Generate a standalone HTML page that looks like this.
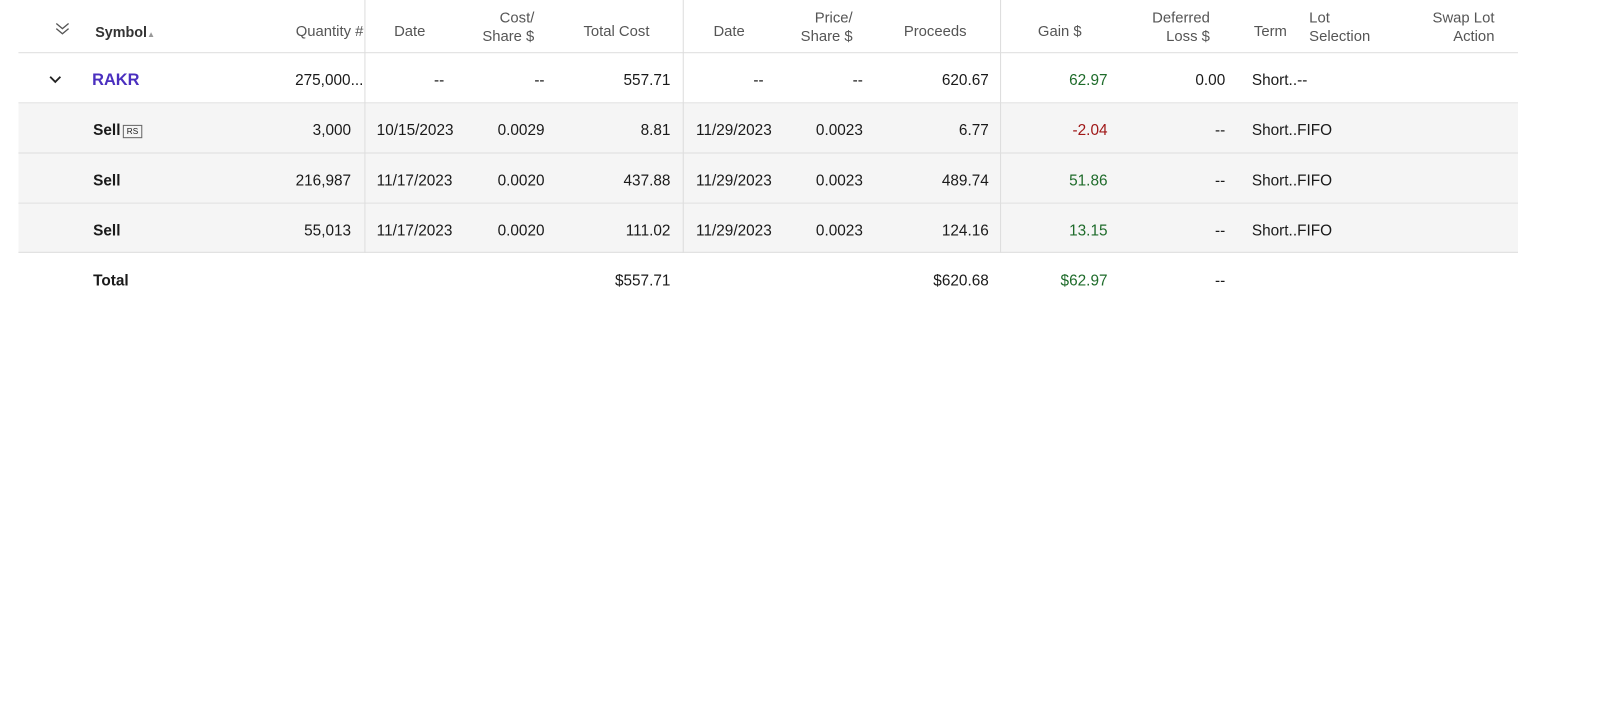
<!DOCTYPE html>
<html><head><meta charset="utf-8"><style>
body{margin:0;width:1605px;height:720px;background:#fff;font-family:"Liberation Sans",sans-serif;font-size:15px;color:#1a1a1a;position:relative;overflow:hidden}
#w{position:absolute;left:0;top:0;width:1568px;height:704px;transform:scale(1.0236);transform-origin:0 0}
.t{position:absolute;white-space:nowrap;line-height:18px}
.r{text-align:right}
.h{color:#555;font-size:14.5px;line-height:18px}
.row{position:absolute;left:18px;width:1465px;border-bottom:1px solid #ddd}
.g{background:#f5f5f5}
.v{position:absolute;top:0;height:247px;width:1px;background:#ddd}
.b{font-weight:bold}
.grn{color:#1e6b2a}.red{color:#a01818}
</style></head><body><div id="w">
<div class="row" style="top:0;height:51px"></div>
<div class="row" style="top:52px;height:48px"></div>
<div class="row g" style="top:101px;height:48px"></div>
<div class="row g" style="top:150px;height:48px"></div>
<div class="row g" style="top:199px;height:47px"></div>
<div class="v" style="left:356px"></div>
<div class="v" style="left:667px"></div>
<div class="v" style="left:977px"></div>

<svg class="t" style="left:53px;top:20px" width="16" height="16" viewBox="0 0 16 16"><path d="M2 3l6 5 6-5M2 8l6 5 6-5" fill="none" stroke="#555" stroke-width="1.3"/></svg>
<div class="t b" style="left:93px;top:22px;font-size:14px;color:#333">Symbol<span style="font-size:8px;color:#999">&#9650;</span></div>
<div class="t h r" style="right:1213px;top:22px">Quantity #</div>
<div class="t h" style="left:385px;top:22px">Date</div>
<div class="t h r" style="right:1046px;top:9px">Cost/<br>Share $</div>
<div class="t h" style="left:570px;top:22px">Total Cost</div>
<div class="t h" style="left:697px;top:22px">Date</div>
<div class="t h r" style="right:735px;top:9px">Price/<br>Share $</div>
<div class="t h" style="left:883px;top:22px">Proceeds</div>
<div class="t h" style="left:1014px;top:22px">Gain $</div>
<div class="t h r" style="right:386px;top:9px">Deferred<br>Loss $</div>
<div class="t h" style="left:1225px;top:22px">Term</div>
<div class="t h" style="left:1279px;top:9px">Lot<br>Selection</div>
<div class="t h r" style="right:108px;top:9px">Swap Lot<br>Action</div>

<svg class="t" style="left:47px;top:71px" width="14" height="14" viewBox="0 0 14 14"><path d="M2 4l5 5 5-5" fill="none" stroke="#222" stroke-width="1.8"/></svg>
<div class="t b" style="left:90px;top:70px;color:#4a2fbf;font-size:16px">RAKR</div>
<div class="t r" style="right:1213px;top:70px">275,000...</div>
<div class="t r" style="right:1134px;top:70px">--</div>
<div class="t r" style="right:1036px;top:70px">--</div>
<div class="t r" style="right:913px;top:70px">557.71</div>
<div class="t r" style="right:822px;top:70px">--</div>
<div class="t r" style="right:725px;top:70px">--</div>
<div class="t r" style="right:602px;top:70px">620.67</div>
<div class="t r grn" style="right:486px;top:70px">62.97</div>
<div class="t r" style="right:371px;top:70px">0.00</div>
<div class="t" style="left:1223px;top:70px">Short..--</div>

<div class="t b" style="left:91px;top:119px">Sell <span style="display:inline-block;border:1px solid #666;font-size:8px;font-weight:normal;line-height:11px;padding:0 3px;vertical-align:1px;margin-left:-2px">RS</span></div>
<div class="t r" style="right:1225px;top:119px">3,000</div>
<div class="t" style="left:368px;top:119px">10/15/2023</div>
<div class="t r" style="right:1036px;top:119px">0.0029</div>
<div class="t r" style="right:913px;top:119px">8.81</div>
<div class="t" style="left:680px;top:119px">11/29/2023</div>
<div class="t r" style="right:725px;top:119px">0.0023</div>
<div class="t r" style="right:602px;top:119px">6.77</div>
<div class="t r red" style="right:486px;top:119px">-2.04</div>
<div class="t r" style="right:371px;top:119px">--</div>
<div class="t" style="left:1223px;top:119px">Short..FIFO</div>

<div class="t b" style="left:91px;top:168px">Sell</div>
<div class="t r" style="right:1225px;top:168px">216,987</div>
<div class="t" style="left:368px;top:168px">11/17/2023</div>
<div class="t r" style="right:1036px;top:168px">0.0020</div>
<div class="t r" style="right:913px;top:168px">437.88</div>
<div class="t" style="left:680px;top:168px">11/29/2023</div>
<div class="t r" style="right:725px;top:168px">0.0023</div>
<div class="t r" style="right:602px;top:168px">489.74</div>
<div class="t r grn" style="right:486px;top:168px">51.86</div>
<div class="t r" style="right:371px;top:168px">--</div>
<div class="t" style="left:1223px;top:168px">Short..FIFO</div>

<div class="t b" style="left:91px;top:217px">Sell</div>
<div class="t r" style="right:1225px;top:217px">55,013</div>
<div class="t" style="left:368px;top:217px">11/17/2023</div>
<div class="t r" style="right:1036px;top:217px">0.0020</div>
<div class="t r" style="right:913px;top:217px">111.02</div>
<div class="t" style="left:680px;top:217px">11/29/2023</div>
<div class="t r" style="right:725px;top:217px">0.0023</div>
<div class="t r" style="right:602px;top:217px">124.16</div>
<div class="t r grn" style="right:486px;top:217px">13.15</div>
<div class="t r" style="right:371px;top:217px">--</div>
<div class="t" style="left:1223px;top:217px">Short..FIFO</div>

<div class="t b" style="left:91px;top:266px">Total</div>
<div class="t r" style="right:913px;top:266px">$557.71</div>
<div class="t r" style="right:602px;top:266px">$620.68</div>
<div class="t r grn" style="right:486px;top:266px">$62.97</div>
<div class="t r" style="right:371px;top:266px">--</div>
</div></body></html>
